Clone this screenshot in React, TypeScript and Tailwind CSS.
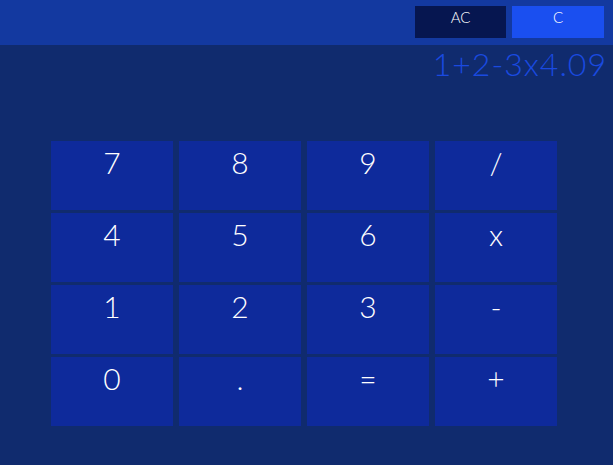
const keys = ["7", "8", "9", "/", "4", "5", "6", "x", "1", "2", "3", "-", "0", ".", "=", "+"];

export default function App() {
  return (
    <div className="h-[465px] w-[613px] bg-[#102b6e] font-['Lato','Noto_Sans',sans-serif] font-light text-white">
      <div className="flex h-[45px] justify-end gap-[6px] bg-[#1339a0] pr-[9px] pt-[6px]">
        <button className="flex h-[32px] w-[91px] items-start justify-center bg-[#061650] pt-[1px] text-[15px] leading-[20px]">AC</button>
        <button className="flex h-[32px] w-[92px] items-start justify-center bg-[#1a4ff0] pt-[1px] text-[15px] leading-[20px]">C</button>
      </div>
      <div className="pr-[6px] text-right text-[32px] leading-[38px] tracking-[1px] text-[#1a4ae0]">1+2-3x4.09</div>
      <div className="ml-[51px] mt-[58px] grid w-[506px] grid-cols-4 gap-x-[6px] gap-y-[3px]">
        {keys.map((k) => (
          <button key={k} className="flex h-[69px] items-start justify-center bg-[#0e2a9b] pt-[2px] text-[30px] leading-[38px]">
            {k}
          </button>
        ))}
      </div>
    </div>
  );
}
